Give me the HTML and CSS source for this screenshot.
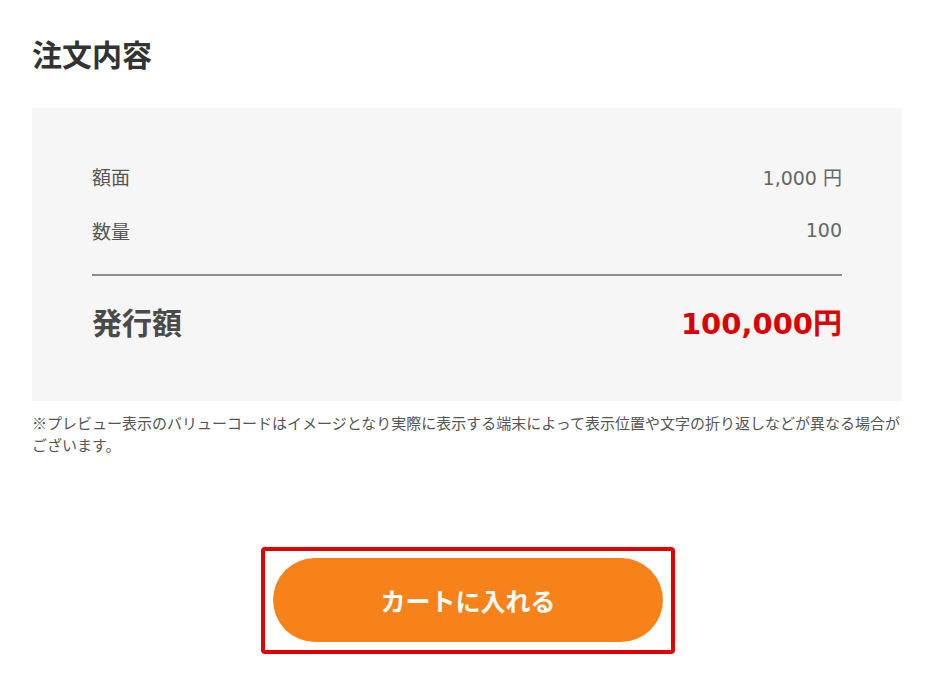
FILE: index.html
```html
<!DOCTYPE html>
<html lang="ja">
<head>
<meta charset="utf-8">
<title>注文内容</title>
<link rel="stylesheet" href="styles.css">
</head>
<body>
<main class="page">
  <h1 class="title">注文内容</h1>
  <section class="summary">
    <div class="row">
      <span class="label">額面</span>
      <span class="value">1,000 円</span>
    </div>
    <div class="row">
      <span class="label">数量</span>
      <span class="value">100</span>
    </div>
    <hr class="divider">
    <div class="total">
      <span class="total-label">発行額</span>
      <span class="total-value">100,000円</span>
    </div>
  </section>
  <p class="note">※プレビュー表示のバリューコードはイメージとなり実際に表示する端末によって表示位置や文字の折り返しなどが異なる場合がございます。</p>
  <div class="actions">
    <div class="highlight">
      <button class="cart-btn" type="button">カートに入れる</button>
    </div>
  </div>
</main>
</body>
</html>
```

FILE: styles.css
```css
html, body {
  margin: 0;
  padding: 0;
  background: #fff;
}
body {
  font-family: "Noto Sans CJK JP", "Noto Sans", sans-serif;
  color: #333;
}
.page {
  width: 870px;
  margin-left: 32px;
  padding-top: 33px;
}
.title {
  margin: 0;
  font-size: 30px;
  line-height: 40px;
  font-weight: 700;
  color: #333;
}
.summary {
  margin-top: 35px;
  background: #f6f6f6;
  padding: 53px 60px 60px;
}
.row {
  display: flex;
  justify-content: space-between;
  align-items: center;
  height: 30px;
  font-size: 19px;
  color: #555;
}
.row + .row {
  margin-top: 24px;
}
.value {
  font-family: "DejaVu Sans", "Noto Sans CJK JP", sans-serif;
  font-size: 19px;
  color: #666;
}
.divider {
  margin: 29px 0 0;
  border: 0;
  border-top: 2px solid #8c8c8c;
  height: 0;
}
.total {
  display: flex;
  justify-content: space-between;
  align-items: center;
  height: 40px;
  margin-top: 25px;
}
.total-label {
  font-size: 30px;
  font-weight: 700;
  color: #4a4a4a;
}
.total-value {
  font-family: "DejaVu Sans", "Noto Sans CJK JP", sans-serif;
  font-size: 29px;
  font-weight: 700;
  color: #d90000;
}
.note {
  margin: 11px 0 0;
  font-size: 15px;
  line-height: 22px;
  color: #555;
}
.actions {
  display: flex;
  justify-content: center;
  margin-top: 91px;
  padding-left: 2px;
}
.highlight {
  border: 4px solid #e00000;
  border-radius: 4px;
  padding: 7px 8px 8px;
  display: flex;
}
.cart-btn {
  width: 390px;
  height: 84px;
  border: 0;
  border-radius: 42px;
  background: #f8821a;
  color: #fff;
  font-family: "Noto Sans CJK JP", sans-serif;
  font-size: 25px;
  font-weight: 700;
  cursor: pointer;
  padding: 0;
}
```
